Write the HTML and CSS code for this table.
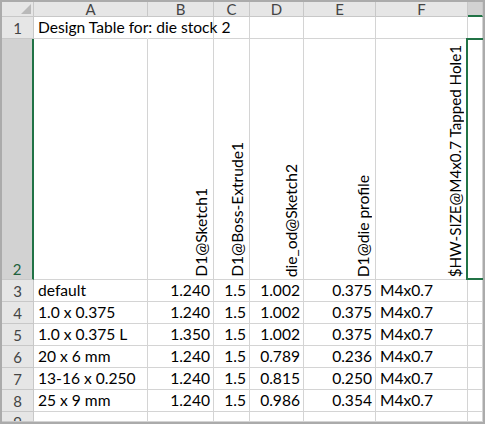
FILE: index.html
```html
<!DOCTYPE html>
<html>
<head>
<meta charset="utf-8">
<title>Design Table</title>
<link rel="stylesheet" href="styles.css">
</head>
<body>
<div class="sheet">
  <div class="grid">
    <div class="corner"><span class="tri"></span></div>
    <div class="ch">A</div>
    <div class="ch">B</div>
    <div class="ch">C</div>
    <div class="ch">D</div>
    <div class="ch">E</div>
    <div class="ch">F</div>
    <div class="ch ch-sel"></div>

    <div class="rh">1</div>
    <div class="c title">Design Table for: die stock 2</div>
    <div class="c"></div>
    <div class="c"></div>
    <div class="c"></div>
    <div class="c"></div>
    <div class="c"></div>
    <div class="c"></div>

    <div class="rh rh-sel">2</div>
    <div class="c"></div>
    <div class="c v"><span>D1@Sketch1</span></div>
    <div class="c v"><span>D1@Boss-Extrude1</span></div>
    <div class="c v"><span>die_od@Sketch2</span></div>
    <div class="c v"><span>D1@die profile</span></div>
    <div class="c v v-long"><span>$HW-SIZE@M4x0.7 Tapped Hole1</span></div>
    <div class="c active"></div>

    <div class="rh">3</div>
    <div class="c">default</div>
    <div class="c n">1.240</div>
    <div class="c n">1.5</div>
    <div class="c n">1.002</div>
    <div class="c n">0.375</div>
    <div class="c">M4x0.7</div>
    <div class="c"></div>

    <div class="rh">4</div>
    <div class="c">1.0 x 0.375</div>
    <div class="c n">1.240</div>
    <div class="c n">1.5</div>
    <div class="c n">1.002</div>
    <div class="c n">0.375</div>
    <div class="c">M4x0.7</div>
    <div class="c"></div>

    <div class="rh">5</div>
    <div class="c">1.0 x 0.375 L</div>
    <div class="c n">1.350</div>
    <div class="c n">1.5</div>
    <div class="c n">1.002</div>
    <div class="c n">0.375</div>
    <div class="c">M4x0.7</div>
    <div class="c"></div>

    <div class="rh">6</div>
    <div class="c">20 x 6 mm</div>
    <div class="c n">1.240</div>
    <div class="c n">1.5</div>
    <div class="c n">0.789</div>
    <div class="c n">0.236</div>
    <div class="c">M4x0.7</div>
    <div class="c"></div>

    <div class="rh">7</div>
    <div class="c">13-16 x 0.250</div>
    <div class="c n">1.240</div>
    <div class="c n">1.5</div>
    <div class="c n">0.815</div>
    <div class="c n">0.250</div>
    <div class="c">M4x0.7</div>
    <div class="c"></div>

    <div class="rh">8</div>
    <div class="c">25 x 9 mm</div>
    <div class="c n">1.240</div>
    <div class="c n">1.5</div>
    <div class="c n">0.986</div>
    <div class="c n">0.354</div>
    <div class="c">M4x0.7</div>
    <div class="c"></div>

    <div class="rh rh-last">9</div>
    <div class="c"></div>
    <div class="c"></div>
    <div class="c"></div>
    <div class="c"></div>
    <div class="c"></div>
    <div class="c"></div>
    <div class="c"></div>
  </div>
</div>
</body>
</html>
```

FILE: styles.css
```css
html, body {
  margin: 0;
  padding: 0;
  background: #ffffff;
}

.sheet {
  width: 485px;
  height: 424px;
  box-sizing: border-box;
  border: 2px solid #ababab;
  overflow: hidden;
  font-family: Lato, "Liberation Sans", sans-serif;
  font-size: 15.6px;
  color: #000;
}

.grid {
  display: grid;
  grid-template-columns: 32px 114px 66px 36px 54px 72px 92px 15px;
  grid-template-rows: 15px 22px 241px repeat(6, 22px) 10px;
  overflow: hidden;
}

.grid > div {
  box-sizing: border-box;
  border-right: 1px solid #d4d4d4;
  border-bottom: 1px solid #d4d4d4;
  white-space: nowrap;
  overflow: hidden;
  min-width: 0;
}

.corner {
  background: #e6e6e6;
  display: flex;
  justify-content: flex-end;
  align-items: flex-end;
  padding: 0 2px 2px 0;
  border-color: #c8c8c8 !important;
}

.tri {
  width: 0;
  height: 0;
  border-left: 10px solid transparent;
  border-bottom: 10px solid #b9b9b9;
}

.ch {
  background: #e6e6e6;
  color: #444;
  font-size: 15px;
  line-height: 14px;
  display: flex;
  align-items: flex-end;
  justify-content: center;
  padding-bottom: 0;
  border-right-color: #c8c8c8 !important;
  border-bottom-color: #c8c8c8 !important;
}

.ch-sel {
  background: #d2d2d2;
  border-bottom: 2px solid #217346 !important;
}

.rh {
  background: #e6e6e6;
  color: #444;
  font-size: 15px;
  display: flex;
  justify-content: center;
  align-items: center;
  border-right-color: #c8c8c8 !important;
  border-bottom-color: #c8c8c8 !important;
}

.rh-sel {
  background: #d2d2d2;
  color: #21613c;
  align-items: flex-end;
  padding-bottom: 1px;
  border-right: 2px solid #217346 !important;
}

.rh-last {
  align-items: flex-start;
  line-height: 18px;
  padding-top: 1px;
}

.c {
  line-height: 21px;
  padding: 0 4px;
  display: flex;
  align-items: flex-end;
}

.title {
  overflow: visible !important;
  position: relative;
  z-index: 1;
  border-right-color: transparent !important;
}

.n {
  justify-content: flex-end;
  padding: 0 3px;
}

.v {
  justify-content: flex-end;
  padding: 0 4px 2px 0;
}

.v span {
  writing-mode: vertical-rl;
  transform: rotate(180deg);
  line-height: 15px;
}

.v-long span {
  font-size: 15.2px;
}

.active {
  position: relative;
  overflow: visible !important;
}

.active::after {
  content: "";
  position: absolute;
  top: -1px;
  left: -2px;
  right: -10px;
  bottom: -1px;
  border: 2px solid #217346;
}
```
